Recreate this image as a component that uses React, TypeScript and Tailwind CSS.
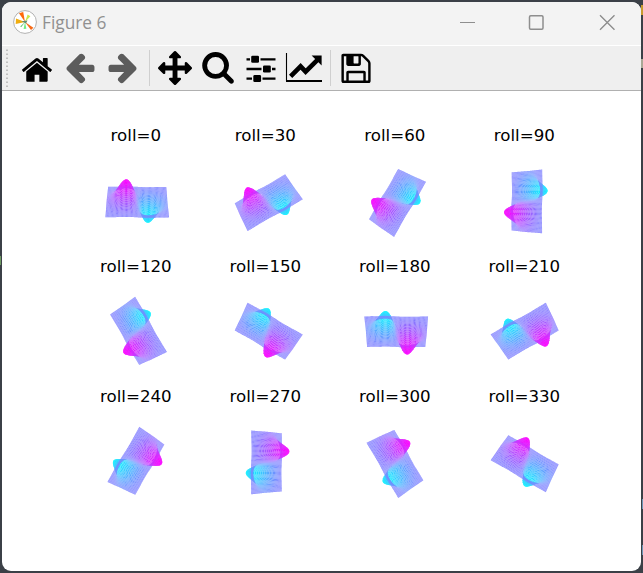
import React from "react";

const HOME =
  "M1472 992v480q0 26-19 45t-45 19h-384v-384h-256v384h-384q-26 0-45-19t-19-45v-480q0-1 .5-3t.5-3l575-474 575 474q1 2 1 6zm223-69l-62 74q-8 9-21 11h-3q-13 0-21-7l-692-577-692 577q-12 8-24 7-13-2-21-11l-62-74q-8-10-7-23.5t11-21.5l719-599q32-26 76-26t76 26l244 204v-195q0-14 9-23t23-9h192q14 0 23 9t9 23v408l219 182q10 8 11 21.5t-7 23.5z";
const ARROW =
  "M1664 896v128q0 53-32.5 90.5t-84.5 37.5h-704l293 294q38 36 38 90t-38 90l-75 76q-37 37-90 37-52 0-91-37l-651-652q-37-37-37-90 0-52 37-91l651-650q38-38 91-38 52 0 90 38l75 74q38 38 38 91t-38 91l-293 293h704q52 0 84.5 37.5t32.5 90.5z";
const MOVE =
  "M1792 896q0 26-19 45l-256 256q-19 19-45 19t-45-19-19-45v-128h-384v384h128q26 0 45 19t19 45-19 45l-256 256q-19 19-45 19t-45-19l-256-256q-19-19-19-45t19-45 45-19h128v-384h-384v128q0 26-19 45t-45 19-45-19l-256-256q-19-19-19-45t19-45l256-256q19-19 45-19t45 19 19 45v128h384v-384h-128q-26 0-45-19t-19-45 19-45l256-256q19-19 45-19t45 19l256 256q19 19 19 45t-19 45-45 19h-128v384h384v-128q0-26 19-45t45-19 45 19l256 256q19 19 19 45z";
const SEARCH =
  "M1216 832q0-185-131.5-316.5t-316.5-131.5-316.5 131.5-131.5 316.5 131.5 316.5 316.5 131.5 316.5-131.5 131.5-316.5zm512 832q0 52-38 90t-90 38q-54 0-90-38l-343-342q-179 124-399 124-143 0-273.5-55.5t-225-150-150-225-55.5-273.5 55.5-273.5 150-225 225-150 273.5-55.5 273.5 55.5 225 150 150 225 55.5 273.5q0 220-124 399l343 343q37 37 37 90z";
const SAVE =
  "M512 1536h768v-384h-768v384zm896 0h128v-896q0-14-10-38.5t-20-34.5l-281-281q-10-10-34-20t-39-10v416q0 40-28 68t-68 28h-576q-40 0-68-28t-28-68v-416h-128v1280h128v-416q0-40 28-68t68-28h832q40 0 68 28t28 68v416zm-384-928v-320q0-13-9.5-22.5t-22.5-9.5h-192q-13 0-22.5 9.5t-9.5 22.5v320q0 13 9.5 22.5t22.5 9.5h192q13 0 22.5-9.5t9.5-22.5zm640 32v928q0 40-28 68t-68 28h-1344q-40 0-68-28t-28-68v-1344q0-40 28-68t68-28h928q40 0 88 20t76 48l280 280q28 28 48 76t20 88z";

function Tool({ label, children }: { label: string; children: React.ReactNode }) {
  return (
    <button aria-label={label} className="flex w-[43px] shrink-0 justify-start">
      <svg width="34" height="34" viewBox="0 0 34 34" className="overflow-visible">
        {children}
      </svg>
    </button>
  );
}

// Surface z = -x * exp(-x^2 - y^2), seen from an elevation of 30 degrees.
const CELLS = 50;
const HALF = 30.4;
const SIN = 0.5;
const COS = 0.866;
const height = (x: number, y: number) => (-x * Math.exp(-x * x - y * y)) / 0.4289;

function project(i: number, j: number) {
  const a = (i / CELLS) * 2 - 1;
  const b = (j / CELLS) * 2 - 1;
  const z = height(a * 2, b * 2) * 0.8;
  const depth = b * COS - z * SIN;
  const s = HALF / (1 + 0.053 * depth);
  return [a * s, -(b * SIN + z * COS) * s];
}

const mesh: { points: string; fill: string }[] = [];
for (let j = CELLS - 1; j >= 0; j--) {
  for (let i = 0; i < CELLS; i++) {
    const corners = [project(i, j), project(i + 1, j), project(i + 1, j + 1), project(i, j + 1)];
    const h = height(((i + 0.5) / CELLS) * 4 - 2, ((j + 0.5) / CELLS) * 4 - 2);
    const t = (h + 1) / 2;
    mesh.push({
      points: corners.map((p) => p.map((v) => v.toFixed(2)).join(",")).join(" "),
      fill: `rgb(${Math.round(255 * t)},${Math.round(255 * (1 - t))},255)`,
    });
  }
}

const rolls = [0, 30, 60, 90, 120, 150, 180, 210, 240, 270, 300, 330];

function Plot({ roll }: { roll: number }) {
  return (
    <div className="flex flex-col">
      <div className="h-[22px] text-center text-[16.67px] leading-[22px] text-black">roll={roll}</div>
      <svg width="129.5" height="108.5" viewBox="0 0 129.5 108.5" className="block">
        <use href="#surface" transform={`translate(66.2 54.4) rotate(${-roll})`} />
      </svg>
    </div>
  );
}

export default function App() {
  return (
    <div className="relative h-[573px] w-[643px] overflow-hidden bg-[#3b4047] p-[2px] font-['DejaVu_Sans',sans-serif]">
      <span className="absolute right-0 top-[5px] h-[10px] w-[2px] bg-[#c99a2e]" />
      <span className="absolute right-0 top-[59px] h-[9px] w-[2px] bg-[#a9a795]" />
      <span className="absolute right-0 top-[499px] h-[10px] w-[1px] bg-[#6d95b5]" />
      <span className="absolute right-0 top-[545px] h-[10px] w-[1px] bg-[#6d95b5]" />
      <span className="absolute left-0 top-[256px] h-[9px] w-[1px] bg-[#6e9a62]" />
      <div className="relative flex h-[569px] w-[639px] flex-col overflow-hidden rounded-[9px] bg-white">
        <header className="flex h-[43px] shrink-0 items-center bg-[#f3f3f3] pl-[11px]">
          <svg width="24" height="24" viewBox="0 0 24 24" className="-mt-[3px] shrink-0">
            <circle cx="12" cy="12" r="11.4" fill="#fff" stroke="#aaa" strokeWidth="0.9" />
            <path d="M12 12L6 3.2L10.2 2z" fill="#ff6a0a" />
            <path d="M12 12L3 8.6L2.7 14z" fill="#f0ad10" />
            <path d="M12 12L14.6 4.6L17.4 6.2z" fill="#cbe84a" />
            <path d="M12 12L20.4 17.8L18 20z" fill="#f76a16" />
            <path d="M12 12L10.6 19L13.4 18.8z" fill="#70ee83" />
            <path d="M12 12L7 16.5L8.5 17z" fill="#70c780" />
            <path d="M8.5 11.2L14.5 10.5L13 13.5z" fill="#648c70" />
          </svg>
          <h1 className="ml-[5px] -mt-[2px] grow font-['Open_Sans',sans-serif] text-[17.3px] leading-6 text-[#909090]">
            Figure 6
          </h1>
          <svg width="182" height="43" viewBox="0 0 182 43" fill="none" stroke="#8e8e8e" strokeWidth="1.2" className="shrink-0">
            <path d="M1 20.5h15" />
            <rect x="70.5" y="13.8" width="13.5" height="13.5" rx="1.2" strokeWidth="1.5" />
            <path d="M141 13.2l14.5 14.5M155.500 13.200l-14.500 14.500" strokeWidth="1.4" />
          </svg>
        </header>
        <nav className="flex h-[46px] shrink-0 items-center border-b border-t border-b-[#b0b0b0] border-t-white bg-[#efefef]">
          <svg width="18" height="44" viewBox="0 0 18 44" className="shrink-0">
            <path d="M5 3.500V42" stroke="#b4b4b4" strokeWidth="1.6" strokeDasharray="1.600 2.400" />
          </svg>
          <Tool label="Home">
            <path d={HOME} transform="translate(.3 2.2) scale(.0186)" />
          </Tool>
          <Tool label="Back">
            <path d={ARROW} fill="#5c5c5c" transform="translate(-.15 -.8) scale(.019)" />
          </Tool>
          <Tool label="Forward">
            <path d={ARROW} fill="#5c5c5c" transform="translate(34.15 -.8) scale(-.019 .019)" />
          </Tool>
          <span className="-mr-px h-9 w-px shrink-0 bg-[#cfcfcf]" />
          <span className="w-[9px] shrink-0" />
          <Tool label="Pan">
            <path d={MOVE} transform="scale(.019)" />
          </Tool>
          <Tool label="Zoom">
            <path d={SEARCH} transform="translate(0 -1.4) scale(.019)" />
          </Tool>
          <Tool label="Subplots">
            <path
              d="M2.500 8.300h3.500M16.500 8.300H31.500M2.500 18H17.500M28 18h3.500M2.500 27.600h5.500M18.500 27.600H31.500"
              stroke="#000"
              strokeWidth="2.300"
            />
            <rect x="7.200" y="4.800" width="7.800" height="7" rx="1.300" />
            <rect x="19" y="14.500" width="7.800" height="7" rx="1.300" />
            <rect x="9.300" y="24.100" width="7.800" height="7" rx="1.300" />
          </Tool>
          <Tool label="Edit">
            <path d="M-.5 2V30" stroke="#000" strokeWidth="1.100" />
            <path d="M-1 30H35" stroke="#000" strokeWidth="2.200" />
            <path
              d="M3.600 25.400L13.600 15.400L18.600 20.600L30.500 8.800"
              stroke="#000"
              strokeWidth="4.600"
              fill="none"
            />
            <path d="M24.600 4.600H34.600V14.600z" />
          </Tool>
          <span className="-mr-px h-9 w-px shrink-0 bg-[#cfcfcf]" />
          <span className="w-[9px] shrink-0" />
          <Tool label="Save">
            <path d={SAVE} transform="translate(0 .3) scale(.019)" />
          </Tool>
        </nav>
        <svg width="0" height="0" className="absolute">
          <defs>
            <g id="surface">
              {mesh.map((cell, k) => (
                <polygon key={k} points={cell.points} fill={cell.fill} />
              ))}
            </g>
          </defs>
        </svg>
        <main className="ml-[69.1px] mt-[34px] grid w-[518px] auto-rows-[130.5px] grid-cols-[repeat(4,129.5px)]">
          {rolls.map((roll) => (
            <Plot key={roll} roll={roll} />
          ))}
        </main>
      </div>
    </div>
  );
}
